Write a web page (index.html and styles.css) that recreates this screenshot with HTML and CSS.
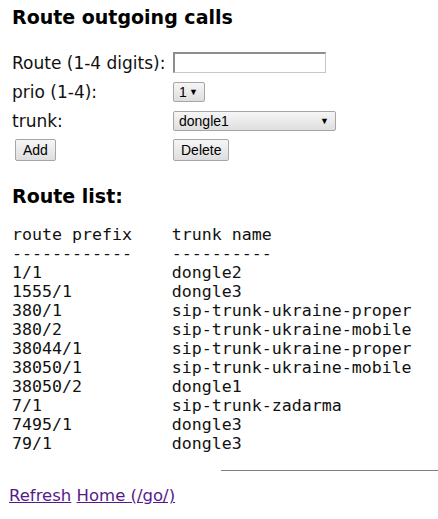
FILE: index.html
```html
<!DOCTYPE html>
<html>
<head>
<meta charset="utf-8">
<link rel="stylesheet" href="styles.css">
</head>
<body>
<h2 class="title">Route outgoing calls</h2>
<form class="form">
  <div class="label">Route (1-4 digits):</div>
  <div class="field"><input class="text-input" type="text"></div>
  <div class="label">prio (1-4):</div>
  <div class="field"><span class="select select-small">1<span class="arrow">&#9660;</span></span></div>
  <div class="label">trunk:</div>
  <div class="field"><span class="select select-wide">dongle1<span class="arrow">&#9660;</span></span></div>
  <div class="field field-btn"><span class="btn">Add</span></div>
  <div class="field"><span class="btn">Delete</span></div>
</form>
<h2 class="title title-list">Route list:</h2>
<pre class="list">route prefix    trunk name
------------    ----------
1/1             dongle2
1555/1          dongle3
380/1           sip-trunk-ukraine-proper
380/2           sip-trunk-ukraine-mobile
38044/1         sip-trunk-ukraine-proper
38050/1         sip-trunk-ukraine-mobile
38050/2         dongle1
7/1             sip-trunk-zadarma
7495/1          dongle3
79/1            dongle3</pre>
<div class="rule"></div>
<div class="links"><a href="#">Refresh</a> <a href="#">Home (/go/)</a></div>
</body>
</html>
```
FILE: styles.css
```css
html, body { margin: 0; padding: 0; background: #fff; }
body {
  padding: 0 0 0 12px;
  font-family: "DejaVu Sans", Verdana, sans-serif;
  font-size: 17px;
  color: #111;
  overflow: hidden;
}
.title {
  margin: 0;
  padding-top: 6px;
  font-family: "DejaVu Sans", Verdana, sans-serif;
  font-weight: bold;
  font-size: 19px;
  line-height: 22px;
  height: 22px;
  color: #000;
}
.form {
  display: grid;
  grid-template-columns: 161px auto;
  grid-auto-rows: 29px;
  margin-top: 20px;
  align-items: center;
}
.label { line-height: 20px; }
.field { display: flex; align-items: center; }
.field-btn { padding-left: 3px; }
.text-input {
  box-sizing: border-box;
  width: 153px;
  height: 21px;
  margin: 0;
  border: 1px solid #c8c8c8;
  border-top: 2px solid #8e8e8e;
  border-left: 2px solid #8e8e8e;
  background: #fff;
  outline: none;
}
.select, .btn {
  box-sizing: border-box;
  display: inline-flex;
  align-items: center;
  border: 1px solid #a6a6a6;
  border-radius: 2px;
  background: linear-gradient(#f6f6f6, #dedede);
  font-family: "Liberation Sans", Arial, sans-serif;
  font-size: 14px;
  color: #000;
}
.select { height: 20px; padding: 0 6px 0 5px; }
.select-small { width: 32px; justify-content: space-between; }
.select-wide { width: 163px; justify-content: space-between; }
.arrow { font-size: 9px; }
.btn { height: 22px; padding: 0 7px; }
.title-list { margin-top: 15px; }
.list {
  margin: 18px 0 0;
  font-family: "DejaVu Sans Mono", monospace;
  font-size: 16.6px;
  line-height: 19px;
  color: #111;
}
.rule {
  margin: 17px -8px 0 209px;
  border-top: 1px solid #808080;
}
.links {
  margin-top: 15px;
  margin-left: -3px;
  font-family: "DejaVu Sans", sans-serif;
  font-size: 16.5px;
}
.links a { color: #551a8b; }
```
